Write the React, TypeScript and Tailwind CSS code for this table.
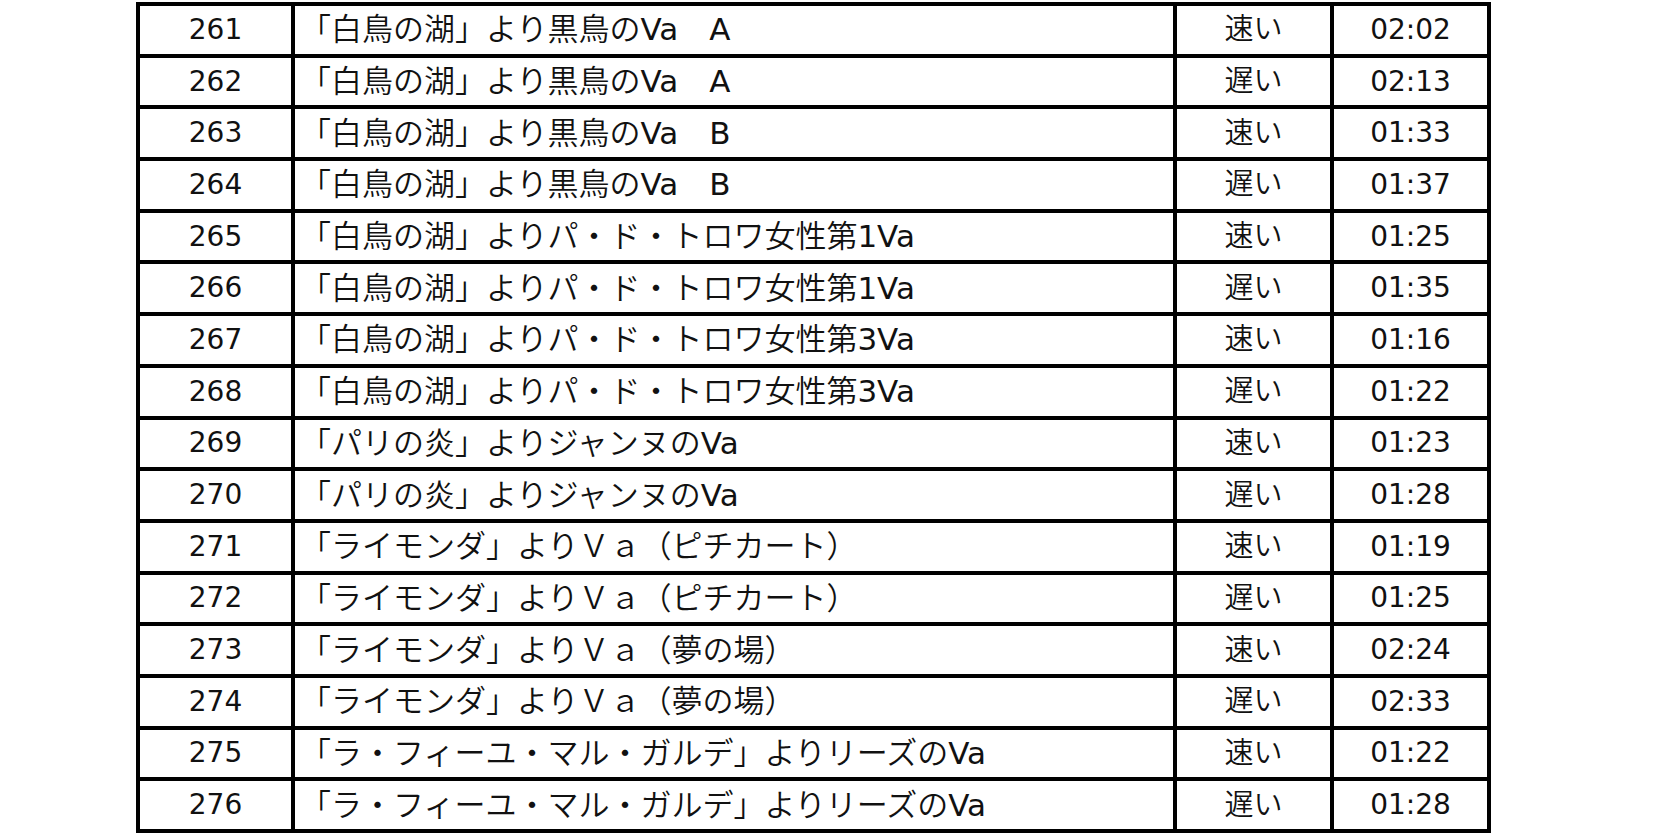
import React from 'react';

type Row = { no: number; title: string; tempo: string; time: string };

const rows: Row[] = [
  { no: 261, title: '「白鳥の湖」より黒鳥のVa　A', tempo: '速い', time: '02:02' },
  { no: 262, title: '「白鳥の湖」より黒鳥のVa　A', tempo: '遅い', time: '02:13' },
  { no: 263, title: '「白鳥の湖」より黒鳥のVa　B', tempo: '速い', time: '01:33' },
  { no: 264, title: '「白鳥の湖」より黒鳥のVa　B', tempo: '遅い', time: '01:37' },
  { no: 265, title: '「白鳥の湖」よりパ・ド・トロワ女性第1Va', tempo: '速い', time: '01:25' },
  { no: 266, title: '「白鳥の湖」よりパ・ド・トロワ女性第1Va', tempo: '遅い', time: '01:35' },
  { no: 267, title: '「白鳥の湖」よりパ・ド・トロワ女性第3Va', tempo: '速い', time: '01:16' },
  { no: 268, title: '「白鳥の湖」よりパ・ド・トロワ女性第3Va', tempo: '遅い', time: '01:22' },
  { no: 269, title: '「パリの炎」よりジャンヌのVa', tempo: '速い', time: '01:23' },
  { no: 270, title: '「パリの炎」よりジャンヌのVa', tempo: '遅い', time: '01:28' },
  { no: 271, title: '「ライモンダ」よりＶａ（ピチカート）', tempo: '速い', time: '01:19' },
  { no: 272, title: '「ライモンダ」よりＶａ（ピチカート）', tempo: '遅い', time: '01:25' },
  { no: 273, title: '「ライモンダ」よりＶａ（夢の場）', tempo: '速い', time: '02:24' },
  { no: 274, title: '「ライモンダ」よりＶａ（夢の場）', tempo: '遅い', time: '02:33' },
  { no: 275, title: '「ラ・フィーユ・マル・ガルデ」よりリーズのVa', tempo: '速い', time: '01:22' },
  { no: 276, title: '「ラ・フィーユ・マル・ガルデ」よりリーズのVa', tempo: '遅い', time: '01:28' },
];

const cell = 'h-[51.69px] border-r-4 border-b-4 border-black flex items-center';

// latin runs keep the regular weight, the japanese text is set lighter
function Title({ text }: { text: string }) {
  return (
    <>
      {text.split(/([A-Za-z0-9]+)/).map((part, i) =>
        /^[A-Za-z0-9]+$/.test(part) ? (
          <span key={i} className="font-normal">{part}</span>
        ) : (
          <span key={i}>{part}</span>
        )
      )}
    </>
  );
}

export default function App() {
  return (
    <div className="w-[1654px] h-[834px] bg-white overflow-hidden pt-[2px] pl-[136px]">
      <div
        className="grid grid-cols-[155px_882px_157px_157px] w-[1355px] border-l-4 border-t-4 border-black text-[28px] leading-none text-[#111]"
        style={{ fontFamily: '"DejaVu Sans", "Noto Sans CJK JP", sans-serif' }}
      >
        {rows.map((r) => (
          <React.Fragment key={r.no}>
            <div className={`${cell} justify-center`}>{r.no}</div>
            <div className={`${cell} pl-[5px] text-[31px] font-[350] whitespace-nowrap`}>
              <Title text={r.title} />
            </div>
            <div className={`${cell} justify-center text-[29px] font-[350]`}>{r.tempo}</div>
            <div className={`${cell} justify-center`}>{r.time}</div>
          </React.Fragment>
        ))}
      </div>
    </div>
  );
}
